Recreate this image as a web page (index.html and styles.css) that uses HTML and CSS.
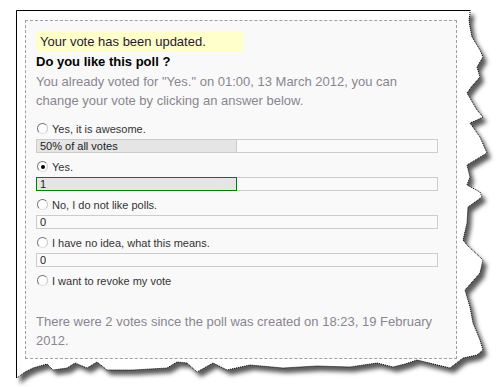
FILE: index.html
```html
<!DOCTYPE html>
<html>
<head>
<meta charset="utf-8">
<link rel="stylesheet" href="styles.css">
</head>
<body>
<div class="sheet">
  <svg class="paper" width="498" height="387" viewBox="0 0 498 387" aria-hidden="true">
    <defs>
      <filter id="blur" x="-10%" y="-10%" width="120%" height="120%">
        <feGaussianBlur stdDeviation="2"/>
      </filter>
    </defs>
    <polygon class="shadow" filter="url(#blur)" transform="translate(4,5)" points="16,10 470,10 470,13 469,20 470,27 472,37 480,50 483,57 477,67 480,77 472,86 467,93 477,110 483,117 477,120 470,123 480,137 487,153 467,165 470,177 467,185 480,192 482,197 468,207 467,223 463,240 467,245 483,260 480,273 465,290 470,307 473,323 480,340 483,350 477,355 463,358 450,368 417,360 405,364 393,367 377,363 350,367 317,366 283,368 250,365 227,370 213,363 197,372 187,363 177,362 167,368 133,370 107,370 97,362 87,368 75,363 67,368 53,370 47,364 33,368 25,372 17,378 16,378"/>
    <polygon class="sheet-fill" points="16,10 470,10 470,13 469,20 470,27 472,37 480,50 483,57 477,67 480,77 472,86 467,93 477,110 483,117 477,120 470,123 480,137 487,153 467,165 470,177 467,185 480,192 482,197 468,207 467,223 463,240 467,245 483,260 480,273 465,290 470,307 473,323 480,340 483,350 477,355 463,358 450,368 417,360 405,364 393,367 377,363 350,367 317,366 283,368 250,365 227,370 213,363 197,372 187,363 177,362 167,368 133,370 107,370 97,362 87,368 75,363 67,368 53,370 47,364 33,368 25,372 17,378 16,378"/>
    <polyline class="edge-solid" points="16.5,378 16.5,10.5 470,10.5"/>
    <polyline class="edge-torn" points="470,10 470,13 469,20 470,27 472,37 480,50 483,57 477,67 480,77 472,86 467,93 477,110 483,117 477,120 470,123 480,137 487,153 467,165 470,177 467,185 480,192 482,197 468,207 467,223 463,240 467,245 483,260 480,273 465,290 470,307 473,323 480,340 483,350 477,355 463,358 450,368 417,360 405,364 393,367 377,363 350,367 317,366 283,368 250,365 227,370 213,363 197,372 187,363 177,362 167,368 133,370 107,370 97,362 87,368 75,363 67,368 53,370 47,364 33,368 25,372 17,378"/>
  </svg>

  <div class="poll">
    <div class="notice">Your vote has been updated.</div>
    <h1 class="question">Do you like this poll ?</h1>
    <p class="info">You already voted for "Yes." on 01:00, 13 March 2012, you can change your vote by clicking an answer below.</p>

    <div class="options">
      <div class="option">
        <div class="label"><span class="radio"></span>Yes, it is awesome.</div>
        <div class="bar">
          <div class="fill" style="width:50%">50% of all votes</div>
          <div class="rest"></div>
        </div>
      </div>
      <div class="option">
        <div class="label"><span class="radio checked"></span>Yes.</div>
        <div class="bar">
          <div class="fill mine" style="width:50%">1</div>
          <div class="rest"></div>
        </div>
      </div>
      <div class="option">
        <div class="label"><span class="radio"></span>No, I do not like polls.</div>
        <div class="bar">
          <div class="rest empty">0</div>
        </div>
      </div>
      <div class="option">
        <div class="label"><span class="radio"></span>I have no idea, what this means.</div>
        <div class="bar">
          <div class="rest empty">0</div>
        </div>
      </div>
      <div class="option">
        <div class="label"><span class="radio"></span>I want to revoke my vote</div>
      </div>
    </div>

    <p class="footer">There were 2 votes since the poll was created on 18:23, 19 February 2012.</p>
  </div>
</div>
</body>
</html>
```

FILE: styles.css
```css
html, body {
  margin: 0;
  padding: 0;
  background: #ffffff;
}

.sheet {
  position: relative;
  width: 498px;
  height: 387px;
  padding: 20px 0 0 25px;
  box-sizing: border-box;
  font-family: "Liberation Sans", Arial, sans-serif;
}

.paper {
  position: absolute;
  left: 0;
  top: 0;
}

.shadow {
  fill: #5a5a5a;
}

.sheet-fill {
  fill: #ffffff;
}

.edge-solid {
  fill: none;
  stroke: #000000;
  stroke-width: 1;
}

.edge-torn {
  fill: none;
  stroke: #000000;
  stroke-width: 1;
  stroke-dasharray: 1 1;
}

.poll {
  position: relative;
  width: 432px;
  box-sizing: border-box;
  border: 1px dashed #a0a0a0;
  background: #f9f9f9;
  padding: 10px 18px 7px 10px;
  font-size: 13px;
  line-height: 19.5px;
}

.notice {
  width: 208px;
  box-sizing: border-box;
  background: #ffffcc;
  border-radius: 4px;
  padding: 1px 4px;
  line-height: 19px;
  color: #2a1a2a;
}

.question {
  margin: 0;
  font-size: 13px;
  font-weight: bold;
  line-height: 19.5px;
  color: #000000;
}

.info {
  margin: 0;
  width: 402px;
  color: #8a8590;
}

.options {
  padding-top: 4px;
  width: 402px;
}

.option {
  padding-top: 6px;
}

.label {
  display: flex;
  align-items: center;
  height: 16px;
  font-size: 11px;
  line-height: 16px;
  color: #333333;
}

.radio {
  width: 11px;
  height: 11px;
  box-sizing: border-box;
  margin: 0 4px 0 1px;
  border-radius: 50%;
  border: 1px solid;
  border-color: #6f6f6f #c8c8c8 #dedede #7a7a7a;
  background: #ffffff;
  display: flex;
  align-items: center;
  justify-content: center;
}

.radio.checked::after {
  content: "";
  width: 4px;
  height: 4px;
  border-radius: 50%;
  background: #000000;
}

.bar {
  display: flex;
  margin-top: 2px;
  height: 14px;
  font-size: 11px;
  line-height: 12px;
  color: #222222;
}

.fill {
  box-sizing: border-box;
  height: 14px;
  border: 1px solid #cccccc;
  background: #e5e5e5;
  padding-left: 3px;
  white-space: nowrap;
}

.fill.mine {
  border-color: #008000;
}

.rest {
  flex: 1;
  box-sizing: border-box;
  height: 14px;
  border: 1px solid #cccccc;
  border-left: none;
  background: #fafafa;
}

.rest.empty {
  border-left: 1px solid #cccccc;
  padding-left: 3px;
}

.footer {
  margin: 23px 0 0 0;
  width: 402px;
  color: #8a8590;
}
```
